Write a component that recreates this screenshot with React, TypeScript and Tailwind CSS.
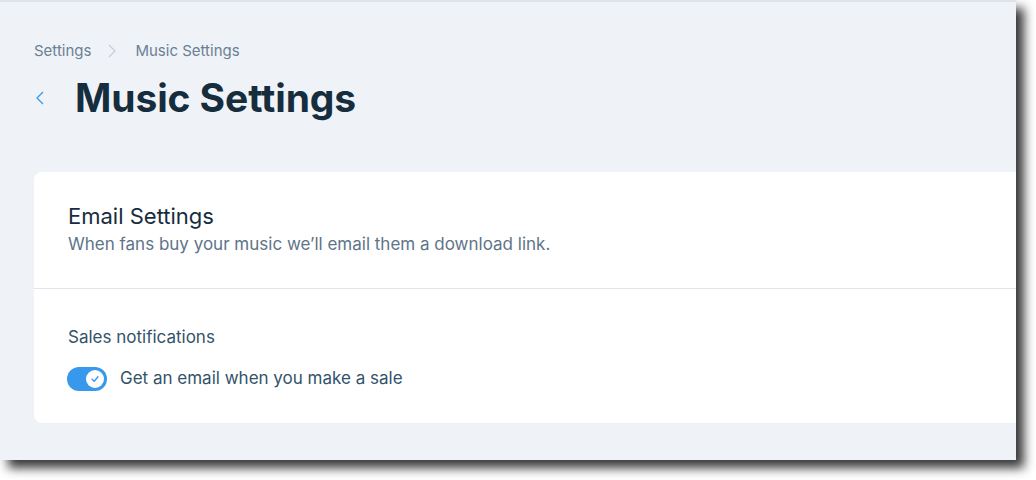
import React from 'react';

const Toggle = ({ on }: { on: boolean }) => (
  <div
    className={`relative w-[40px] h-[24px] rounded-full flex items-center px-[3px] ${
      on ? 'bg-[#3899ec] justify-end' : 'bg-[#c1d1de] justify-start'
    }`}
  >
    <div className="w-[18px] h-[18px] rounded-full bg-white flex items-center justify-center">
      {on && (
        <svg width="10" height="10" viewBox="0 0 10 10" fill="none">
          <path d="M2 5.2 L4.2 7.2 L8 2.8" stroke="#3899ec" strokeWidth="1.4" strokeLinecap="round" strokeLinejoin="round" />
        </svg>
      )}
    </div>
  </div>
);

export default function App() {
  return (
    <div className="w-[1036px] h-[480px] bg-white font-['Inter',sans-serif]">
      <div className="w-[1016px] h-[460px] bg-[#eff3f7] border-t-2 border-[#dde3ea] overflow-hidden shadow-[8px_8px_10px_rgba(0,0,0,0.78)]">
        <div className="pl-[34px] pt-[38px]">
          <div className="flex items-center text-[15px] text-[#6b8093] h-[22px]">
            <span>Settings</span>
            <svg className="ml-[17px] mr-[19px]" width="8" height="14" viewBox="0 0 8 14" fill="none">
              <path d="M1 1 L7 7 L1 13" stroke="#c3ced8" strokeWidth="1.2" />
            </svg>
            <span>Music Settings</span>
          </div>
          <div className="flex items-center mt-[14px] h-[44px]">
            <svg className="ml-[2px]" width="8" height="14" viewBox="0 0 8 14" fill="none">
              <path d="M7 1 L1 7 L7 13" stroke="#3899ec" strokeWidth="1.3" />
            </svg>
            <h1 className="ml-[31px] text-[39px] font-bold text-[#162d3d] tracking-[-0.1px]">Music Settings</h1>
          </div>
          <div className="mt-[52px] w-[1000px] bg-white rounded-[8px]">
            <div className="px-[34px] pt-[30px] pb-[32px]">
              <div className="text-[22px] text-[#162d3d] leading-[28px]">Email Settings</div>
              <div className="text-[17px] text-[#5e7488] leading-[24px] mt-[2px]">
                When fans buy your music we’ll email them a download link.
              </div>
            </div>
            <div className="h-px bg-[#dfe5eb]" />
            <div className="px-[33px] pt-[36px] pb-[31px]">
              <div className="text-[17px] text-[#32536a] leading-[24px] pl-px">Sales notifications</div>
              <div className="flex items-center mt-[17px]">
                <Toggle on />
                <span className="ml-[13px] text-[17px] text-[#32536a]">Get an email when you make a sale</span>
              </div>
            </div>
          </div>
        </div>
      </div>
    </div>
  );
}
